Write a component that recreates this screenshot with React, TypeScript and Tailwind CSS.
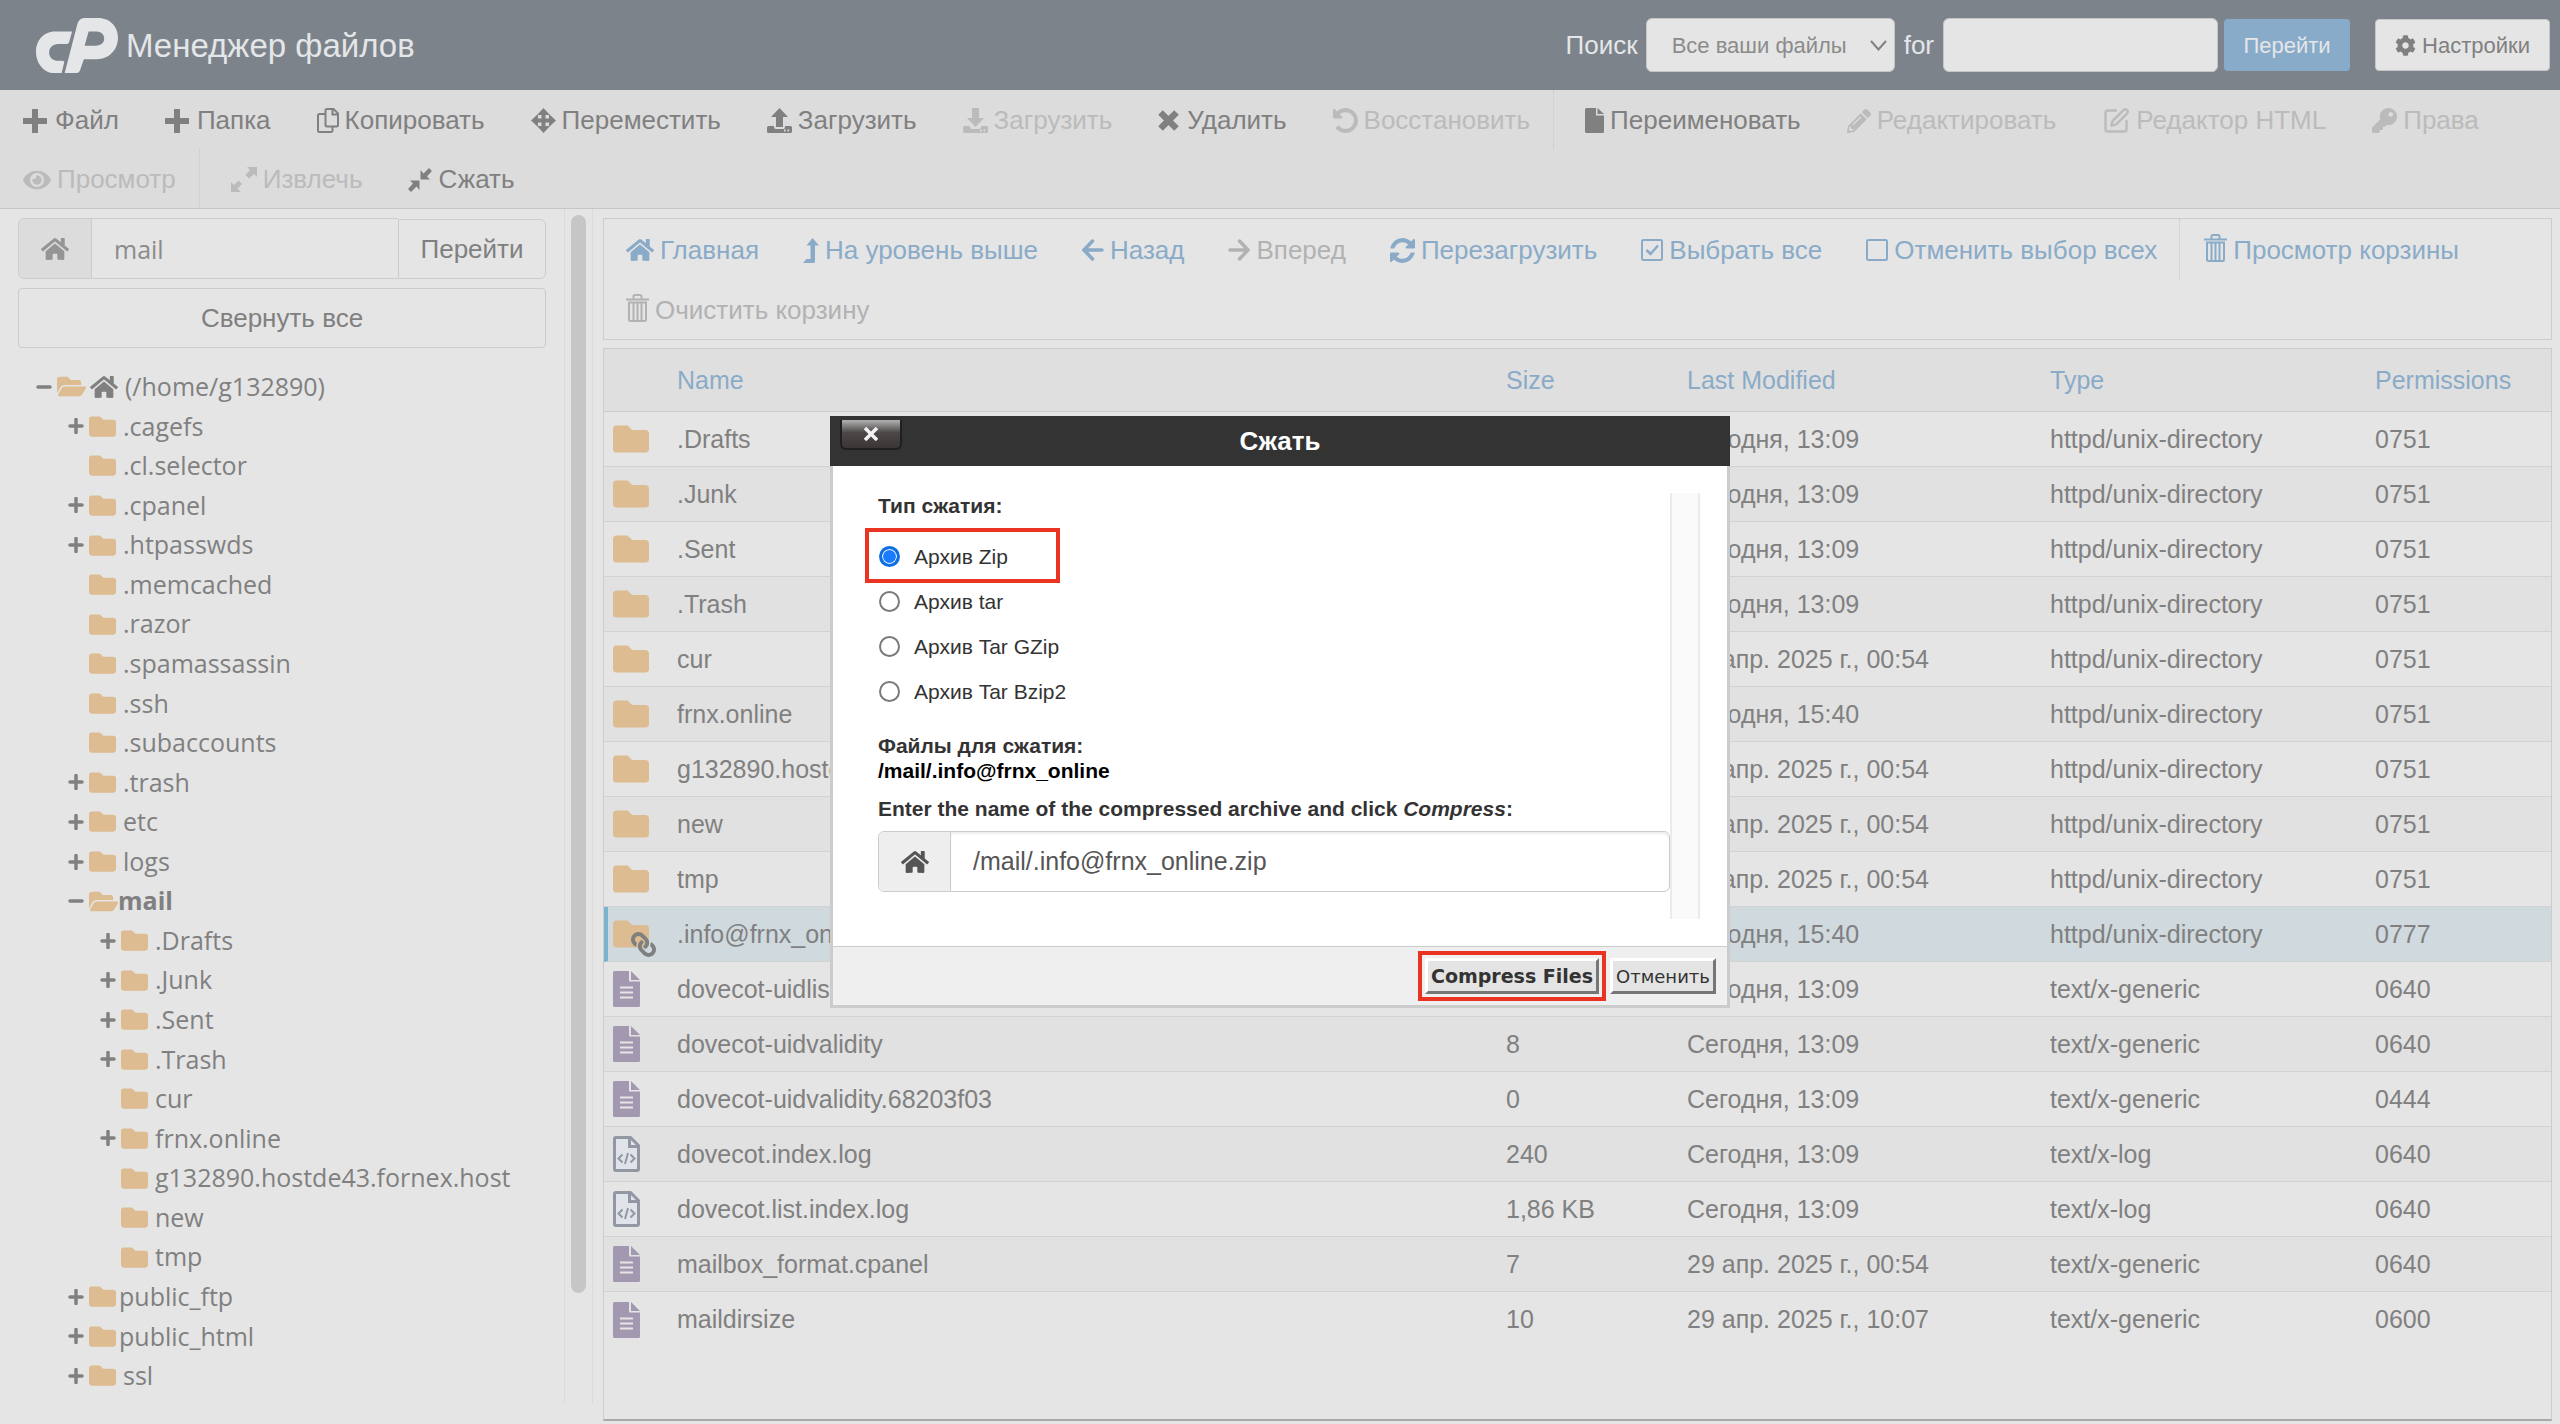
import React, { useState } from "react";
import {
  FaCog,
  FaEye,
  FaFolder,
  FaFolderOpen,
  FaHome,
  FaKey,
  FaLink,
  FaPencilAlt,
} from "react-icons/fa";
import { SquarePen } from "lucide-react";

/* ---------- icons ---------- */

const PlusIcon = () => (
  <svg className="mr-0.5" width="24" height="24" viewBox="0 0 24 24" fill="currentColor">
    <path d="M9 0.6Q9 0 9.6 0h4.8q.6 0 .6.6V9h8.4q.6 0 .6.6v4.8q0 .6-.6.6H15v8.4q0 .6-.6.6H9.6q-.6 0-.6-.6V15H.6q-.6 0-.6-.6V9.6Q0 9 .6 9H9z" />
  </svg>
);

const CopyIcon = () => (
  <svg width="22" height="25" viewBox="0 0 22 25" fill="none" stroke="currentColor" strokeWidth="2">
    <path d="M10 1h6.500l4.500 4.500V17a1.500 1.500 0 0 1-1.500 1.500H10A1.500 1.500 0 0 1 8.500 17V2.500A1.500 1.500 0 0 1 10 1z" />
    <path d="M15.500 1v5.500H21" />
    <path d="M8 6H2.500A1.500 1.500 0 0 0 1 7.500v15A1.500 1.500 0 0 0 2.500 24H14a1.500 1.500 0 0 0 1.500-1.500V19" />
  </svg>
);

const MoveIcon = () => (
  <svg width="25" height="25" viewBox="0 0 25 25" fill="currentColor">
    <path d="M12.500 0l6.500 7h-4.500v3.500H18V6l7 6.500-7 6.500v-4.500h-3.500V18H19l-6.500 7L6 18h4.500v-3.500H7V19l-7-6.500L7 6v4.500h3.500V7H6z" />
  </svg>
);

const TRAY =
  "M1.500 18H7v1a2 2 0 0 0 2 2h7a2 2 0 0 0 2-2v-1h5.500a1.500 1.500 0 0 1 1.500 1.500v4a1.500 1.500 0 0 1-1.500 1.500h-22A1.500 1.500 0 0 1 0 23.500v-4A1.500 1.500 0 0 1 1.500 18zM17 21.500v2h1.600v-2zM20.500 21.500v2h1.600v-2z";

const UploadIcon = () => (
  <svg width="25" height="25" viewBox="0 0 25 25" fill="currentColor" fillRule="evenodd">
    <path d="M12.500 0l8.500 9h-5v10H9V9H4z" />
    <path d={TRAY} />
  </svg>
);

const DownloadIcon = () => (
  <svg width="25" height="25" viewBox="0 0 25 25" fill="currentColor" fillRule="evenodd">
    <path d="M9 0h7v10h5l-8.500 9L4 10h5z" />
    <path d={TRAY} />
  </svg>
);

const TimesIcon = () => (
  <svg className="mr-0.5" width="21" height="21" viewBox="0 0 21 21" stroke="currentColor" strokeWidth="6.500">
    <path d="M2.500 2.500l16 16M18.500 2.500l-16 16" />
  </svg>
);

const UndoIcon = () => (
  <svg width="25" height="25" viewBox="128 128 1536 1536" fill="currentColor">
    <path d="M1664 896q0 156-61 298t-164 245-245 164-298 61q-172 0-327-72.500t-264-204.500q-7-10-6.500-22.500t8.500-20.500l137-138q10-9 25-9 16 2 23 12 73 95 179 147t225 52q104 0 198.500-40.500t163.500-109.500 109.500-163.500 40.500-198.500-40.500-198.500-109.500-163.500-163.500-109.500-198.500-40.500q-98 0-188 35.500t-160 101.500l137 138q31 30 14 69-17 40-59 40h-448q-26 0-45-19t-19-45v-448q0-42 40-59 39-17 69 14l130 129q107-101 244.500-156.500t284.500-55.500q156 0 298 61t245 164 164 245 61 298z" />
  </svg>
);

const FileIcon = () => (
  <svg width="19" height="25" viewBox="0 0 19 25" fill="currentColor">
    <path d="M1.500 0H11v7.500h8v16a1.500 1.500 0 0 1-1.500 1.500h-16A1.500 1.500 0 0 1 0 23.500v-22A1.500 1.500 0 0 1 1.500 0z" />
    <path d="M12.500 0L19 6h-6.500z" />
  </svg>
);

const ExpandIcon = () => (
  <svg width="26" height="25" viewBox="0 0 26 25" fill="currentColor">
    <path d="M16 0h10v10l-3-3-5 4.500L14.500 8 19 3z" />
    <path d="M0 25V15l3 3 4.500-4.500L11 17l-4.500 4.500L10 25z" />
  </svg>
);

const CompressIcon = () => (
  <svg width="24" height="24" viewBox="0 0 24 24" fill="currentColor">
    <path d="M24 3l-3-3-5.500 5.500L12.500 2v9.500H22l-3-3z" />
    <path d="M0 21l3 3 5.500-5.500 3 3.500v-9.500H2l3 3z" />
  </svg>
);

const LevelUpIcon = () => (
  <svg width="16" height="25" viewBox="0 0 16 25" fill="currentColor">
    <path d="M9.500 0L16 7.500h-4V23.500a1.500 1.500 0 0 1-1.500 1.500H0l3.500-4H7.500V7.500H3.500z" />
  </svg>
);

const BackIcon = () => (
  <svg width="22" height="22" viewBox="0 0 22 22" fill="none" stroke="currentColor" strokeWidth="3.500" strokeLinecap="round">
    <path d="M10.500 2L2 11l8.500 9M3 11h17" />
  </svg>
);

const ForwardIcon = () => (
  <svg width="22" height="22" viewBox="0 0 22 22" fill="none" stroke="currentColor" strokeWidth="3.500" strokeLinecap="round">
    <path d="M11.500 2L20 11l-8.500 9M19 11H2" />
  </svg>
);

const RefreshIcon = () => (
  <svg width="25" height="25" viewBox="128 128 1536 1536" fill="currentColor">
    <path d="M1639 1056q0 5-1 7-64 268-268 434.500t-478 166.500q-146 0-282.500-55t-243.500-157l-129 129q-19 19-45 19t-45-19-19-45v-448q0-26 19-45t45-19h448q26 0 45 19t19 45-19 45l-137 137q71 66 161 102t187 36q134 0 250-65t186-179q11-17 53-117 8-23 30-23h192q13 0 22.500 9.500t9.500 22.500zm25-800v448q0 26-19 45t-45 19h-448q-26 0-45-19t-19-45 19-45l138-138q-148-137-349-137-134 0-250 65t-186 179q-11 17-53 117-8 23-30 23h-199q-13 0-22.500-9.500t-9.500-22.500v-7q65-268 270-434.500t480-166.500q146 0 284 55.500t245 156.500l130-129q19-19 45-19t45 19 19 45z" />
  </svg>
);

const BoxIcon = ({ checked = false }: { checked?: boolean }) => (
  <svg width="22" height="22" viewBox="0 0 22 22" fill="none" stroke="currentColor" strokeWidth="2">
    <rect x="1" y="1" width="20" height="20" rx="1.500" />
    {checked && <path d="M5.500 11l4 4 7.500-8.500" strokeWidth="2.500" />}
  </svg>
);

const TrashIcon = () => (
  <svg className="mb-1" width="23" height="28" viewBox="0 0 23 28" fill="none" stroke="currentColor" strokeWidth="2">
    <path d="M0 5.500h23M7.500 5V2.500Q7.500 1 9 1h5q1.500 0 1.500 1.500V5" />
    <path d="M3 8.500h17V25.500a1.500 1.500 0 0 1-1.500 1.500h-14A1.500 1.500 0 0 1 3 25.500zM7.500 9v17M11.500 9v17M15.500 9v17" />
  </svg>
);

const Logo = () => (
  <svg width="82" height="55" viewBox="0 0 243 163" fill="#e4e6e8" fillRule="evenodd" aria-label="cPanel">
    <path d="M107 40H56C22 40 0 68 0 99c0 36 24 64 54 64h22l8-33q-2-3-6-3H66c-16 0-27-10-27-25 0-14 11-25 26-25h27q5 0 6-5z" />
    <path d="M85 163L122 20Q127 0 143 0h42c34 0 58 26 58 58 0 38-28 64-62 64h-39l-12 34q-3 7-10 7zM156 40l-12 42h33c15 0 25-8 25-21 0-12-9-21-23-21z" />
  </svg>
);

const DocIcon = () => (
  <svg width="27" height="36" viewBox="0 0 27 36" fill="#a299b1">
    <path d="M1.500 0H16v9.500q0 1 1 1h10v24a1.500 1.500 0 0 1-1.500 1.500h-24A1.500 1.500 0 0 1 0 34.500v-33A1.500 1.500 0 0 1 1.500 0z" />
    <path d="M18 0l9 9h-9z" />
    <path d="M7 16.500h13M7 21.500h13M7 26.500h13" stroke="#e5e5e5" strokeWidth="2" />
  </svg>
);

const LogIcon = () => (
  <svg width="27" height="36" viewBox="0 0 27 36" fill="#e0e4ea" stroke="#9197a3" strokeWidth="3">
    <path d="M3 1.500h14.500l8 8V33q0 1.500-1.500 1.500H3Q1.500 34.500 1.500 33V3Q1.500 1.500 3 1.500z" />
    <path d="M16.500 2v8.500H25" fill="none" />
    <path d="M9.500 18.500l-4 4 4 4M17.500 18.500l4 4-4 4M15 17l-3 11" fill="none" strokeWidth="2" />
  </svg>
);

/* ---------- data ---------- */

type Tool = { label: string; icon: React.ReactNode; off?: boolean; split?: boolean };

const TOOLS: Tool[] = [
  { label: "Файл", icon: <PlusIcon /> },
  { label: "Папка", icon: <PlusIcon /> },
  { label: "Копировать", icon: <CopyIcon /> },
  { label: "Переместить", icon: <MoveIcon /> },
  { label: "Загрузить", icon: <UploadIcon /> },
  { label: "Загрузить", icon: <DownloadIcon />, off: true },
  { label: "Удалить", icon: <TimesIcon /> },
  { label: "Восстановить", icon: <UndoIcon />, off: true },
  { label: "Переименовать", icon: <FileIcon />, split: true },
  { label: "Редактировать", icon: <FaPencilAlt size={24} />, off: true },
  { label: "Редактор HTML", icon: <SquarePen size={28} strokeWidth={2} />, off: true },
  { label: "Права", icon: <FaKey size={25} />, off: true },
  { label: "Просмотр", icon: <FaEye size={28} />, off: true },
  { label: "Извлечь", icon: <ExpandIcon />, off: true, split: true },
  { label: "Сжать", icon: <CompressIcon /> },
];

const NAV: Tool[] = [
  { label: "Главная", icon: <FaHome size={28} /> },
  { label: "На уровень выше", icon: <LevelUpIcon /> },
  { label: "Назад", icon: <BackIcon /> },
  { label: "Вперед", icon: <ForwardIcon />, off: true },
  { label: "Перезагрузить", icon: <RefreshIcon /> },
  { label: "Выбрать все", icon: <BoxIcon checked /> },
  { label: "Отменить выбор всех", icon: <BoxIcon /> },
  { label: "Просмотр корзины", icon: <TrashIcon />, split: true },
  { label: "Очистить корзину", icon: <TrashIcon />, off: true },
];

type Node = { name: string; level: 1 | 2; mark?: "plus" | "minus"; tight?: boolean };

const TREE: Node[] = [
  { name: ".cagefs", level: 1, mark: "plus" },
  { name: ".cl.selector", level: 1 },
  { name: ".cpanel", level: 1, mark: "plus" },
  { name: ".htpasswds", level: 1, mark: "plus" },
  { name: ".memcached", level: 1 },
  { name: ".razor", level: 1 },
  { name: ".spamassassin", level: 1 },
  { name: ".ssh", level: 1 },
  { name: ".subaccounts", level: 1 },
  { name: ".trash", level: 1, mark: "plus" },
  { name: "etc", level: 1, mark: "plus" },
  { name: "logs", level: 1, mark: "plus" },
  { name: "mail", level: 1, mark: "minus", tight: true },
  { name: ".Drafts", level: 2, mark: "plus" },
  { name: ".Junk", level: 2, mark: "plus" },
  { name: ".Sent", level: 2, mark: "plus" },
  { name: ".Trash", level: 2, mark: "plus" },
  { name: "cur", level: 2 },
  { name: "frnx.online", level: 2, mark: "plus" },
  { name: "g132890.hostde43.fornex.host", level: 2 },
  { name: "new", level: 2 },
  { name: "tmp", level: 2 },
  { name: "public_ftp", level: 1, mark: "plus", tight: true },
  { name: "public_html", level: 1, mark: "plus", tight: true },
  { name: "ssl", level: 1, mark: "plus" },
];

type Kind = "dir" | "link" | "doc" | "log";
type Row = [Kind, string, string, string, string, string];

const DIR = "httpd/unix-directory";
const ROWS: Row[] = [
  ["dir", ".Drafts", "", "Сегодня, 13:09", DIR, "0751"],
  ["dir", ".Junk", "", "Сегодня, 13:09", DIR, "0751"],
  ["dir", ".Sent", "", "Сегодня, 13:09", DIR, "0751"],
  ["dir", ".Trash", "", "Сегодня, 13:09", DIR, "0751"],
  ["dir", "cur", "", "29 апр. 2025 г., 00:54", DIR, "0751"],
  ["dir", "frnx.online", "", "Сегодня, 15:40", DIR, "0751"],
  ["dir", "g132890.hostde43.fornex.host", "", "29 апр. 2025 г., 00:54", DIR, "0751"],
  ["dir", "new", "", "29 апр. 2025 г., 00:54", DIR, "0751"],
  ["dir", "tmp", "", "29 апр. 2025 г., 00:54", DIR, "0751"],
  ["link", ".info@frnx_online", "", "Сегодня, 15:40", DIR, "0777"],
  ["doc", "dovecot-uidlist", "", "Сегодня, 13:09", "text/x-generic", "0640"],
  ["doc", "dovecot-uidvalidity", "8", "Сегодня, 13:09", "text/x-generic", "0640"],
  ["doc", "dovecot-uidvalidity.68203f03", "0", "Сегодня, 13:09", "text/x-generic", "0444"],
  ["log", "dovecot.index.log", "240", "Сегодня, 13:09", "text/x-log", "0640"],
  ["log", "dovecot.list.index.log", "1,86 KB", "Сегодня, 13:09", "text/x-log", "0640"],
  ["doc", "mailbox_format.cpanel", "7", "29 апр. 2025 г., 00:54", "text/x-generic", "0640"],
  ["doc", "maildirsize", "10", "29 апр. 2025 г., 10:07", "text/x-generic", "0600"],
];

const FORMATS = ["Архив Zip", "Архив tar", "Архив Tar GZip", "Архив Tar Bzip2"];

/* ---------- page parts ---------- */

function Header() {
  return (
    <header className="flex h-[90px] items-center bg-[#7c838b] pr-2.5 pl-9 text-[#e4e6e8]">
      <Logo />
      <h1 className="ml-2 text-[33px]">Менеджер файлов</h1>
      <form className="ml-auto flex items-center" onSubmit={(e) => e.preventDefault()}>
        <label htmlFor="scope" className="mr-2">Поиск</label>
        <div className="relative">
          <select
            id="scope"
            className="h-[54px] w-[249px] appearance-none rounded-md border border-[#c6c6c6] bg-[#e5e5e5] pl-[25px] text-[22px] text-[#8b8b8b]"
          >
            <option>Все ваши файлы</option>
          </select>
          <svg className="pointer-events-none absolute top-[22px] right-2" width="17" height="11" viewBox="0 0 17 11" fill="none" stroke="#808080" strokeWidth="2">
            <path d="M1 1l7.500 8.500L16 1" />
          </svg>
        </div>
        <label htmlFor="query" className="mx-[9px]">for</label>
        <input id="query" type="text" className="h-[54px] w-[275px] rounded-md border border-[#c6c6c6] bg-[#e5e5e5] px-5" />
        <button type="submit" className="ml-1.5 h-[52px] w-[126px] rounded-[4px] bg-[#89abca] text-[22px]">Перейти</button>
        <button type="button" className="ml-[25px] flex h-[52px] w-[175px] items-center justify-center gap-1.5 rounded-[4px] border border-[#c6c6c6] bg-[#e5e5e5] text-[22px] text-[#808080]">
          <FaCog size={21} />
          Настройки
        </button>
      </form>
    </header>
  );
}

function ToolItem({ tool, tone }: { tool: Tool; tone: "bar" | "nav" }) {
  const bar = tone === "bar";
  const color = bar
    ? tool.off ? "text-[#bbbbbb]" : "text-[#808080]"
    : tool.off ? "text-[#b2b2b2]" : "text-[#8aabc8]";
  const size = bar ? "h-[59px] px-[23px]" : "h-[60px] px-[22px]";
  const split = bar
    ? "flex border-l border-dotted border-[#c6c6c6] pl-2"
    : "flex border-l border-dotted border-[#c6c6c6] pl-0.5";
  return (
    <li className={tool.split ? split : "flex"}>
      <button type="button" className={`flex items-center gap-1.5 pt-0.5 whitespace-nowrap ${size} ${color}`}>
        {tool.icon}
        {tool.label}
      </button>
    </li>
  );
}

function Toggle({ mark }: { mark?: "plus" | "minus" }) {
  return (
    <svg width="16" height="16" viewBox="0 0 16 16" stroke="currentColor" strokeWidth="3.500" strokeLinecap="round">
      {mark && <path d="M2 8h12" />}
      {mark === "plus" && <path d="M8 1.500v13" />}
    </svg>
  );
}

function Sidebar() {
  return (
    <aside className="flex w-[593px] shrink-0">
      <div className="min-w-0 flex-1 pt-[9px] pr-[18px] pl-[18px]">
        <form className="flex items-end" onSubmit={(e) => e.preventDefault()}>
          <label htmlFor="path" className="flex h-[61px] w-[74px] shrink-0 items-center justify-center rounded-l-md border border-[#cccccc] bg-[#dcdcdc] text-[#959595]">
            <FaHome size={28} />
          </label>
          <input
            id="path"
            type="text"
            defaultValue="mail"
            className="h-[61px] min-w-0 flex-1 border-y border-[#cccccc] bg-[#e5e5e5] pl-[22px] font-['Open_Sans',sans-serif] text-[25px] text-[#8b8b8b]"
          />
          <button type="submit" className="h-[60px] w-[148px] shrink-0 rounded-r-md border border-[#cccccc]">Перейти</button>
        </form>
        <button type="button" className="mt-[9px] h-[60px] w-full rounded-[4px] border border-[#cccccc]">Свернуть все</button>
        <ul className="mt-[19px] pl-[18px] font-['Open_Sans',sans-serif] text-[25px] leading-[1.583]">
          <li className="flex items-center">
            <Toggle mark="minus" />
            <FaFolderOpen size={29} className="mr-1 ml-[5px] text-[#dcbc90]" />
            <FaHome size={28} className="mr-[7px]" />
            (/home/g132890)
          </li>
          {TREE.map((n) => (
            <li key={n.name} className={n.level === 1 ? "flex items-center pl-8" : "flex items-center pl-16"}>
              <Toggle mark={n.mark} />
              {n.mark === "minus" ? (
                <FaFolderOpen size={29} className="ml-[5px] text-[#dcbc90]" />
              ) : (
                <FaFolder size={27} className="ml-[5px] text-[#dcbc90]" />
              )}
              <span className={n.mark === "minus" ? "font-bold" : n.tight ? "ml-[3px]" : "ml-[7px]"}>{n.name}</span>
            </li>
          ))}
        </ul>
      </div>
      <div className="mb-5 w-[29px] shrink-0 border-x border-[#dadada] px-[6px] pt-[6px]">
        <div className="h-[1078px] rounded-full bg-[#c6c6c6]" />
      </div>
    </aside>
  );
}

function KindIcon({ kind }: { kind: Kind }) {
  if (kind === "doc") return <DocIcon />;
  if (kind === "log") return <LogIcon />;
  return (
    <span className="relative block w-9">
      <FaFolder size={36} className="text-[#dcbc90]" />
      {kind === "link" && <FaLink size={25} className="absolute top-4 left-[18px] -scale-x-100 text-[#808080]" />}
    </span>
  );
}

function FileTable() {
  return (
    <table className="w-full table-fixed border-separate border-spacing-0 text-left text-[25px]">
      <colgroup>
        <col className="w-[65px]" />
        <col />
        <col className="w-[181px]" />
        <col className="w-[363px]" />
        <col className="w-[325px]" />
        <col className="w-[184px]" />
      </colgroup>
      <thead>
        <tr className="h-[63px] bg-[#dfdfdf] text-[#8aabc8]">
          <th className="border-b border-[#cccccc]" aria-label="Icon" />
          {["Name", "Size", "Last Modified", "Type", "Permissions"].map((h) => (
            <th key={h} scope="col" className="border-b border-[#cccccc] px-2 font-normal">{h}</th>
          ))}
        </tr>
      </thead>
      <tbody>
        {ROWS.map(([kind, ...cells], i) => {
          const picked = kind === "link";
          const last = i === ROWS.length - 1;
          const line = last ? "" : "border-b border-[#d2d2d2]";
          return (
            <tr key={cells[0]} className={picked ? "h-[55px] bg-[#cfd9de]" : i % 2 ? "h-[55px] bg-[#e1e1e1]" : "h-[55px]"}>
              <td className={`${line} ${picked ? "border-l-4 border-l-[#7ab3cb] pl-[5px]" : "pl-[9px]"}`}>
                <KindIcon kind={kind} />
              </td>
              {cells.map((c, j) => (
                <td key={j} className={`px-2 whitespace-nowrap ${line}`}>{c}</td>
              ))}
            </tr>
          );
        })}
      </tbody>
    </table>
  );
}

function CompressDialog() {
  const [format, setFormat] = useState(FORMATS[0]);
  return (
    <div className="fixed inset-0 flex items-center justify-center">
      <section role="dialog" aria-labelledby="dlg-title" className="w-[900px] text-[21px] leading-[25px] text-[#333333]">
        <div className="relative flex h-[50px] items-center justify-center bg-[#333333]">
          <button
            type="button"
            aria-label="Закрыть"
            className="absolute top-1 left-[10px] flex h-[30px] w-[62px] items-center justify-center rounded-b-md border-2 border-t-0 border-[#1f1f1f] bg-linear-to-b from-[#a8a8a8] from-5% via-[#4d4848] via-45% to-[#3a3636]"
          >
            <svg width="14" height="14" viewBox="0 0 14 14" stroke="#f2f2f2" strokeWidth="3.500">
              <path d="M1 1l12 12M13 1L1 13" />
            </svg>
          </button>
          <h2 id="dlg-title" className="text-[26px] font-bold text-white">Сжать</h2>
        </div>
        <div className="flex h-[480px] border-x-3 border-[#cccccc] bg-white pt-[27px] pr-[27px] pb-[27px] pl-[45px]">
          <form className="flex-1" onSubmit={(e) => e.preventDefault()}>
            <fieldset>
              <legend className="mb-4 font-bold">Тип сжатия:</legend>
              {FORMATS.map((f, i) => (
                <label key={f} className="relative flex h-[45px] items-center">
                  {i === 0 && <span className="absolute -top-[6px] -left-[13px] h-[55px] w-[195px] border-4 border-[#ea3323]" />}
                  <input
                    type="radio"
                    name="format"
                    checked={format === f}
                    onChange={() => setFormat(f)}
                    className="mr-3.5 ml-px h-[21px] w-[21px] appearance-none rounded-full border-2 border-[#7a7a7a] bg-white checked:border-[3px] checked:border-[#0d6fe0] checked:bg-[#1a7bff] checked:shadow-[inset_0_0_0_1px_#ffffff]"
                  />
                  {f}
                </label>
              ))}
            </fieldset>
            <p className="mt-[19px] font-bold">Файлы для сжатия:</p>
            <p className="font-bold text-black">/mail/.info@frnx_online</p>
            <label htmlFor="archive" className="mt-[13px] block font-bold">
              Enter the name of the compressed archive and click <em>Compress</em>:
            </label>
            <div className="mt-[10px] flex h-[61px] rounded-md border border-[#cccccc]">
              <span className="flex w-[72px] items-center justify-center rounded-l-md border-r border-[#cccccc] bg-[#eeeeee] text-[#555555]">
                <FaHome size={28} />
              </span>
              <input
                id="archive"
                type="text"
                defaultValue="/mail/.info@frnx_online.zip"
                className="min-w-0 flex-1 rounded-r-md pl-[22px] text-[25px] text-[#555555] shadow-[inset_0_2px_2px_rgba(0,0,0,0.07)]"
              />
            </div>
          </form>
          <div className="w-[30px] border-x-2 border-[#ebebeb] bg-[#fafafa]" />
        </div>
        <div className="flex h-[62px] items-center justify-end gap-[11px] border-3 border-t border-[#cccccc] bg-[#efefef] pr-[11px] font-['DejaVu_Sans',sans-serif]">
          <span className="relative">
            <button type="button" className="h-9 w-[174px] border-3 border-t-white border-r-[#767676] border-b-[#767676] border-l-white bg-[#e4e4e4] text-[19px] font-bold whitespace-nowrap">
              Compress Files
            </button>
            <span className="pointer-events-none absolute -inset-[7px] border-4 border-[#ea3323]" />
          </span>
          <button type="button" className="h-9 w-[106px] border-3 border-t-white border-r-[#767676] border-b-[#767676] border-l-white bg-[#e4e4e4] text-[18px]">
            Отменить
          </button>
        </div>
      </section>
    </div>
  );
}

export default function App() {
  return (
    <div className="flex min-h-screen flex-col bg-[#e5e5e5] font-['Liberation_Sans',Arial,sans-serif] text-[26px] leading-[37px] text-[#808080]">
      <Header />
      <ul className="flex flex-wrap border-b border-[#c6c6c6] bg-[#dcdcdc]">
        {TOOLS.map((t, i) => (
          <ToolItem key={i} tool={t} tone="bar" />
        ))}
      </ul>
      <div className="flex flex-1 items-stretch">
        <Sidebar />
        <main className="flex min-w-0 flex-1 flex-col pt-[9px] pr-2 pb-[3px] pl-[10px]">
          <ul className="mb-2 flex flex-wrap border border-[#cccccc]">
            {NAV.map((t, i) => (
              <ToolItem key={i} tool={t} tone="nav" />
            ))}
          </ul>
          <div className="flex-1 border border-b-2 border-[#cccccc] border-b-[#a8a8a8]">
            <FileTable />
          </div>
        </main>
      </div>
      <CompressDialog />
    </div>
  );
}
